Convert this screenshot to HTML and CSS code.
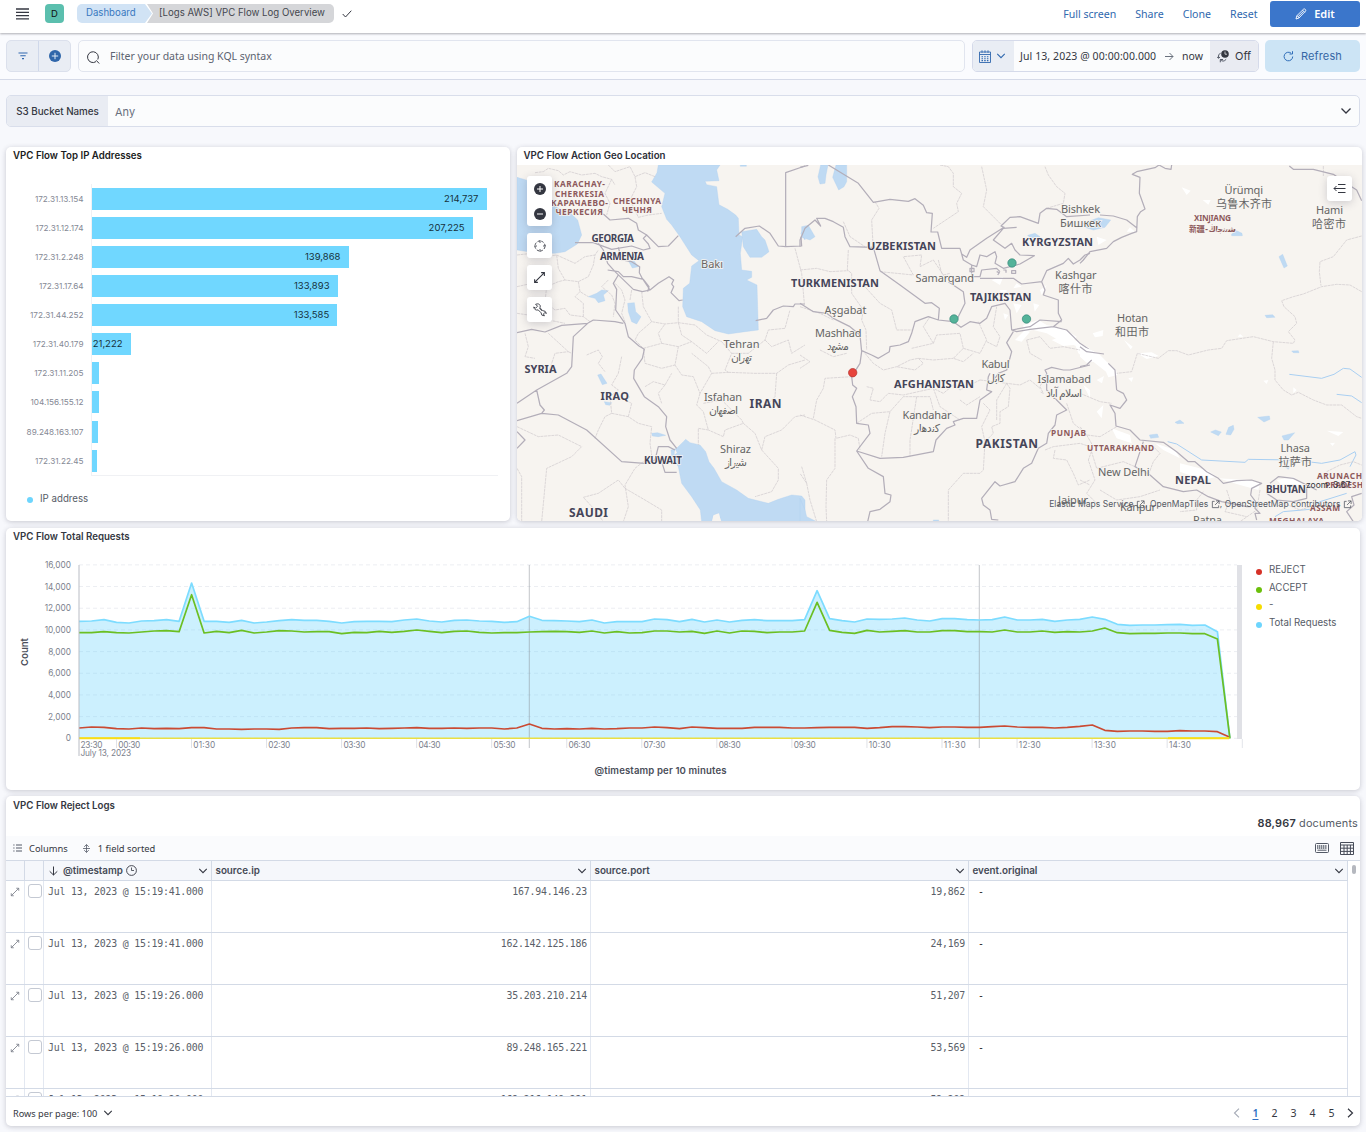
FILE: index.html
```html
<!DOCTYPE html>
<html lang="en">
<head>
<meta charset="utf-8">
<title>[Logs AWS] VPC Flow Log Overview</title>
<link rel="stylesheet" href="styles.css">
</head>
<body>
<svg class="defs" width="0" height="0" aria-hidden="true">
  <symbol id="chev" viewBox="0 0 12 12"><path d="M1.5 3.5 6 8l4.500-4.500" fill="none" stroke="currentColor" stroke-width="1.300"/></symbol>
  <symbol id="expand" viewBox="0 0 12 12"><path d="M7.500 1.500h3v3M10.500 1.500l-9 9M1.500 7.500v3h3" fill="none" stroke="currentColor"/></symbol>
  <symbol id="popout" viewBox="0 0 10 10"><path d="M4 1.500H1.500v7h7V6M5.500 1h3.500v3.500M9 1 4.500 5.500" fill="none" stroke="currentColor" stroke-width=".9"/></symbol>
</svg>

<header class="header">
  <svg class="burger" viewBox="0 0 13 12"><path d="M0 1h13M0 4.300h13M0 7.600h13M0 10.900h13" stroke="#343741" stroke-width="1.300"/></svg>
  <span class="avatar">D</span>
  <nav class="crumbs"><span class="crumb first">Dashboard</span><span class="crumb last">[Logs AWS] VPC Flow Log Overview</span></nav>
  <svg class="tick" viewBox="0 0 10 8"><path d="M.7 4 3.500 7 9.300.7" fill="none" stroke="#343741"/></svg>
  <nav class="links"><a>Full screen</a><a>Share</a><a>Clone</a><a>Reset</a></nav>
  <button class="edit"><svg viewBox="0 0 12 12"><path d="M1 11l.8-3.200L8.500 1.200q.9-.7 1.800.2t.2 1.800L4 10 1 11zM2 7.600 4.300 10M7.600 2.200 9.800 4.400M3.200 8.600l5.400-5.300" fill="none" stroke="#fff" stroke-width=".9"/></svg>Edit</button>
</header>

<section class="querybar">
  <div class="filters">
    <span><svg width="10" height="8" viewBox="0 0 10 8"><path d="M.5 1h9M2.300 3.800h5.400M4 6.600h2" stroke="#3068ae" stroke-width="1.100"/></svg></span>
    <span><svg width="12" height="12" viewBox="0 0 12 12"><circle cx="6" cy="6" r="6" fill="#2f66aa"/><path d="M6 2.800v6.400M2.800 6h6.400" stroke="#dfe9f5"/></svg></span>
  </div>
  <div class="search"><svg width="14" height="14" viewBox="0 0 14 14"><path d="M10 11.600A5.400 5.400 0 1 1 11.800 9.500M10.200 10.300l3 3.200" fill="none" stroke="#343741"/></svg><span class="placeholder">Filter your data using KQL syntax</span></div>
  <div class="dates">
    <span class="cal"><svg width="12" height="13" viewBox="0 0 12 13"><path d="M.5 2h11v10.500H.500zM.5 4.500h11M3 .3v2.500M6 .3v2.500M9 .3v2.500" fill="none" stroke="#3068ae" stroke-width=".9"/><path d="M2.500 6.700h7M2.500 8.700h7M2.500 10.600h7" stroke="#3068ae" stroke-width="1.100" stroke-dasharray="1.500 1.200"/></svg><svg width="10" height="10"><use href="#chev"/></svg></span>
    <span class="range"><b>Jul 13, 2023 @ 00:00:00.000</b><svg width="9" height="9" viewBox="0 0 9 9"><path d="M0 4.500h8M4.500 1 8 4.500 4.500 8" fill="none" stroke="#69707d"/></svg><b>now</b></span>
    <span class="off"><svg width="12" height="13" viewBox="0 0 12 13"><circle cx="8" cy="4" r="3.800" fill="#343741"/><path d="M8 1.500v2.700h2" fill="none" stroke="#fff" stroke-width=".7"/><path d="M3.700 2.800Q.8 4.500 1.400 8M0 6.700l1.400 1.600L3 7.100M3.300 9.500Q6 12.800 9.200 9.300M3.300 12.300V9.500h2.700" fill="none" stroke="#555b68"/></svg>Off</span>
  </div>
  <button class="refresh"><svg width="11" height="11" viewBox="0 0 11 11"><path d="M9.700 5.500A4.300 4.300 0 1 1 8 2.100M6.500 3h3V.2" fill="none" stroke="#2f6db8"/></svg>Refresh</button>
</section>

<main>
  <div class="control"><span class="control-name">S3 Bucket Names</span><span class="control-value">Any</span><svg width="12" height="12"><use href="#chev"/></svg></div>

  <div class="row">
    <section class="panel ips">
      <h2>VPC Flow Top IP Addresses</h2>
      <div class="bars">
        <div class="bar"><label>172.31.13.154</label><i style="width:395px">214,737</i></div>
        <div class="bar"><label>172.31.12.174</label><i style="width:381px">207,225</i></div>
        <div class="bar"><label>172.31.2.248</label><i style="width:257px">139,868</i></div>
        <div class="bar"><label>172.31.17.64</label><i style="width:246px">133,893</i></div>
        <div class="bar"><label>172.31.44.252</label><i style="width:245.700px">133,585</i></div>
        <div class="bar"><label>172.31.40.179</label><i style="width:39px">21,222</i></div>
        <div class="bar"><label>172.31.11.205</label><i style="width:7px"></i></div>
        <div class="bar"><label>104.156.155.12</label><i style="width:7px"></i></div>
        <div class="bar"><label>89.248.163.107</label><i style="width:6.600px"></i></div>
        <div class="bar"><label>172.31.22.45</label><i style="width:5.500px"></i></div>
      </div>
      <div class="legend ip-legend"><span><em class="blue"></em>IP address</span></div>
    </section>

    <section class="panel geo">
      <h2>VPC Flow Action Geo Location</h2>
      <div class="map">
        <svg class="map-canvas" viewBox="517 165 845 356" width="845" height="356">
          <rect x="517" y="165" width="845" height="356" fill="#f7f4f0"/>
          <g transform="translate(515 140) scale(.33333)">
            <g class="water">
              <path d="M6 112 40 122 75 165 130 205 165 218 188 240 200 285 187 312 150 335 120 340 60 338 6 330Z"/>
              <path d="M430 75 426 98 410 126 450 160 440 200 455 238 470 255 495 290 530 345 552 362 530 378 524 430 505 445 503 500 515 530 560 545 600 572 640 582 690 575 730 570 726 435 695 420 710 412 710 394 680 390 676 340 683 290 672 285 670 235 662 225 638 208 612 194 605 140 575 134 570 124 612 122 605 90 615 75Z"/>
              <path d="M683 300 680 275 725 268 740 290 750 300 762 335 740 352 705 352 685 320Z"/>
              <path d="M468 930 485 925 505 905 512 898 525 908 555 915 572 935 582 965 597 985 620 1025 665 1050 700 1075 760 1090 790 1078 830 1065 860 1068 870 1080V1145H620L610 1120 595 1125 590 1145H560L556 1110 530 1070 500 1030 490 980 470 950Z"/>
              <path d="M220 470 245 460 260 450 280 452 265 465 270 482 250 488 240 475Z M338 490 358 488 362 515 378 530 365 552 350 545 340 515Z M340 362 358 364 370 380 352 384Z M248 705 258 702 276 730 262 734Z M268 785 290 788 284 796 272 794Z M410 880 428 878 452 886 430 890 412 888Z M858 280 870 260V300Z M676 75h18v4h-18Z"/>
            </g>
            <g class="land"><path d="M480 928 486 938 478 944Z M595 1127 612 1120 618 1145H592Z"/></g>
            <g class="admin">
              <path d="M60 98 85 95 100 85 130 92 145 105 165 95 200 105 240 100 260 110 290 118 300 135M280 75 300 95 345 80 360 110 390 98 420 110M360 110 365 140 345 180 360 210 370 232 400 225 440 220M290 118 270 160 285 190 275 225"/>
              <path d="M6 345 50 340 90 350 125 345 180 370 210 350 240 345 250 330M125 345 130 385 150 420 190 425 220 410 235 375 240 345M6 440 50 430 95 440 130 425 150 420M190 425 195 455 220 470M95 440 90 485 120 510 150 505 165 525 205 530 225 545M6 520 40 525 80 515 100 540 150 550M280 420 260 440 290 465 300 490 295 530M50 430 60 395 100 380M205 530 205 490 180 470 195 455"/>
              <path d="M30 580 40 620 30 650 60 655M100 580 160 635 120 640 100 700M160 635 170 640M215 645 250 630 262 650 250 670 270 695M320 650 310 700 290 735 310 750 285 770 290 820 270 830 250 870 240 895M290 820 340 830 370 850 410 860 405 910 410 945M340 830 350 790 330 780 345 770M6 860 70 890 130 885 200 920 170 950 95 985 80 1145M6 985 20 1010 20 1145M410 945 360 985 330 1035 340 1100 325 1145M330 1045 310 1020 250 1060 205 1072 240 1110 265 1145M330 1045 390 1080 440 1110 440 1145"/>
              <path d="M380 455 385 500 410 545 450 552 490 548 540 555 575 585 620 605 650 640 630 690 640 697M350 450 345 480M300 430 320 450 330 480 320 520 330 545M410 545 370 580 360 600 385 625M385 625 440 610 430 580 450 552M440 610 490 620 530 605 575 640 610 605M490 548 500 585 530 605M490 500 490 548M385 625 390 670 440 685 480 675 490 620M480 675 500 705 535 710 555 760 590 700 580 680 530 640M390 740 415 725 450 735 470 700M640 697 720 700 785 700 820 675 870 660M785 700 780 770 760 790M590 700 640 697M450 735 430 760 440 790M555 760 545 795 565 815 580 870 550 865 550 915M565 790 620 780 680 840 685 850 630 870 625 890 580 870M685 850 720 880 740 930 790 985 790 1020 770 1055 720 1070M740 930 750 890 800 870 840 830 870 825M650 640 700 640 750 600 760 570 810 565 825 510M750 600 770 620 820 600 830 640 870 615M840 325 860 400 868 490"/>
            </g>
            <g class="border">
              <path d="M180 308 235 308 290 328 350 318 385 330 405 325 400 312 385 295 395 285 430 320 460 318 490 287M265 222 285 240 340 235 365 250 370 270 395 285M250 310 265 330 278 370 300 395 355 448 382 455 405 450 380 412 373 398 374 380 350 365 320 360 310 322M405 450 430 430 462 410 476 420 470 432 476 440 468 458 492 482 503 480M278 390 310 395 325 410 350 410 385 418 402 440 398 455M310 405 295 430 305 448 302 510 330 550 340 590 372 618 388 628 382 655 358 690 356 715 388 770 430 800 455 830 452 860 465 900 485 925M6 578 50 568 90 576 140 556 218 550 235 540 300 545 325 550M218 550 175 590 170 680 155 700 65 750 6 790M65 750 75 795 88 810 80 820 6 842M80 820 130 825 215 870 320 965 388 970M6 875 30 900 6 925M388 970 420 960 430 920 460 920 480 930M440 965 450 997 485 997M662 290 690 265 733 258 765 280 790 318 812 320 860 318 858 290M812 318V98L870 78M722 542 755 535 775 510 805 498 835 500 840 492 870 492"/>
            </g>
          </g>
          <g transform="translate(800 140) scale(.33333)">
            <g class="water"><path d="M62 75H84L78 105 75 130 60 132 54 110Z M108 75H140L140 125 132 140 116 150 98 112Z M5 260 25 256 45 290 30 300 5 292Z M0 1075 15 1110 20 1130 50 1145H0Z M683 286 705 280 720 290 690 293Z M400 1140h16v5h-16Z"/></g>
            <g class="snow"><path d="M650 430 665 440 640 445Z M575 420 610 410 600 435Z M600 450 620 450 618 475 605 470Z M640 490 665 495 650 520Z M720 450 740 435 725 465Z M670 555 715 540 740 555 790 565 830 590 815 610 775 600 740 580 700 570 670 575Z M755 600 790 588 815 596 845 610 850 625 820 615 790 618Z M645 600 675 570 690 575 665 605Z M820 600 870 625V670L835 640Z M850 735 870 750V775Z M700 490 718 495 704 515Z M660 460 685 470 690 455 680 485 655 475Z M610 520 625 525 615 540Z"/></g>
            <g class="admin">
              <path d="M420 75 445 80 460 100 460 140 485 160 470 190 475 215 400 265M545 80 560 150 550 200 605 255M735 80 745 105 770 140 795 160 790 190 740 205M225 185 237 205 215 240 220 330M130 245 150 290 195 320M145 330 142 390 155 400 155 460 190 510 185 540 198 570 200 630M240 395 340 405 310 350 365 345 360 380 400 360 430 405 450 400M0 390 50 385 90 395 145 392M190 435 240 490 275 510 290 570 335 570M415 360 425 400 440 415"/>
              <path d="M335 625 400 610 370 560 390 530M400 610 410 585 480 580 490 625 540 640 560 600 535 545M490 625 460 655 490 665 520 640M195 640 220 670 250 690 290 680 330 660 355 655 400 660 460 655M355 655 370 670 345 690 290 680M200 740 220 745 210 780 240 785 265 760 310 765 400 745 430 760 460 735 480 750 540 720M170 850 215 820 270 815 310 770 390 770 400 810M270 815 255 880 245 950M350 770 330 900 330 950M400 745 420 800 480 840M480 780 500 795 540 770M620 730 630 745 625 800 600 815 600 850 575 860 580 880 555 905 550 990 540 1000 490 1000 445 1050 445 1145M540 720 620 730 660 735 690 720 720 745M550 790 570 810 545 860 555 905M560 605 590 620 600 590 580 560 590 500M590 840 590 780 620 730"/>
              <path d="M0 645 30 665 0 685M155 710 75 715 70 745 50 780 40 835M0 825 45 840 105 870 108 895 150 885 175 895 180 930M105 895 105 985 80 1020 78 1100 80 1145M5 980 20 1030 0 1000M20 1030 30 1080 50 1145M60 630 100 650 140 640M0 500 60 520 100 540"/>
              <path d="M740 700 720 740 730 760 720 755M800 790 820 850 845 870M735 930 760 920 840 910 870 920M765 930 760 955 800 960 820 1000 835 1035 870 1020M680 600 720 590 750 625 790 620 840 630M680 600 690 640 725 660"/>
            </g>
            <g class="border">
              <path d="M0 82 25 76M85 75 175 130 220 187 270 178 325 184 345 176 370 196 380 218 397 220 393 276 413 276 425 325 480 325 485 342 500 352 510 330 560 295 612 262 603 258 630 232 660 230 715 250 720 220 740 205 770 208 800 230 870 225M0 320 0 300 15 265 45 240 62 258 50 235 75 235 100 245 130 262 135 290 150 320 220 322 240 392 300 435 375 490 395 488 418 505 415 540M415 540 385 530 345 545 335 580 325 605 300 615 270 620 268 635 235 655 215 645 185 632M0 490 40 515 80 520 100 535 150 560 180 585 185 635 180 670 155 710 158 735 170 745 157 770 168 800 170 850 205 855 210 880 170 933 240 955 310 952 400 935 408 900 440 865 465 855 460 845 490 835 530 835 540 780 575 755 560 750 565 710 570 700M415 540 460 545 483 562 510 545 540 550 560 535 575 500 615 490 630 510 635 570 650 575 690 568 760 560 800 570 820 590 840 610 870 630M640 575 620 608 635 635 620 690 595 700 585 715M170 933 205 985 250 1010 255 1060 273 1065 270 1085 240 1108 210 1115 203 1145M485 342 490 360 515 375 515 410 540 410 545 390 590 385 600 395M515 375 530 380 540 345 560 350 585 335 590 350 585 370 610 385 660 372 703 347 660 345 645 330 635 310 615 325 580 300 610 265 650 262M540 415 590 415 640 415 665 432 725 425 740 392 790 370 805 355 820 372 840 360 855 345 870 340M445 425 490 455 495 490 470 540M725 425 735 450 730 465 775 480 775 520 785 540 760 560M635 570 690 560 720 540 785 545M740 700 735 690 755 682 790 690 810 690 870 675M740 700 740 750 770 780 800 810 770 825 765 855 745 880 740 910 715 925 695 970 670 985 645 1025 600 1038 585 1025 545 1075 550 1095 570 1110 575 1138 595 1140"/>
              <path d="M590 395 598 398 593 405M610 390h8v8M635 392h12v8h-12ZM510 385h12v10h-12Z"/>
            </g>
          </g>
          <g transform="translate(1080 140) scale(.33333)">
            <g class="water"><path d="M10 250 55 233 92 240 75 262 40 270 15 262Z M597 350 608 343 622 378 612 384Z M555 526 578 524 585 532 560 533Z M635 633 655 632 657 638 640 638Z M455 282 470 272 486 280 487 287 455 287Z M285 847 300 840 312 850 292 851Z M533 832 568 828 570 838 552 846Z M392 876 406 870 424 876 415 887Z M446 862 460 856 462 868 452 885 438 883Z M606 888 644 878 625 900 612 900Z M208 885 232 882 236 892 212 895Z M612 978 630 978 625 988Z"/></g>
            <g class="snow"><path d="M305 142 332 152 320 165Z M368 180 392 180 385 194Z M38 580 70 570 68 588 45 592Z M132 600 158 620 152 628Z M172 640 215 637 236 648 200 657Z M0 620 30 628 60 645 80 665 108 690 112 705 85 712 78 695 40 665 20 668 0 650Z M95 865 150 885 155 910 110 895Z M225 910 285 930 300 955 250 930Z M300 970 380 990 410 1010 370 1020 300 995Z M415 1015 500 1020 540 1030 535 1050 480 1035Z M590 1020 640 1010 670 1035 610 1040Z M740 872 790 876 775 888Z M550 722 565 720 560 732Z M640 742 650 750 640 760Z M473 590 480 582 490 590Z M145 715 160 712 155 726Z M50 815 70 795 65 835Z M0 735 25 755 40 770Z M150 262 165 275 140 275Z M50 290 80 300 55 315Z M750 910 765 908 758 918Z M50 720 72 708 66 730Z"/></g>
            <g class="river"><path d="M628 703 725 715 762 703 790 685 810 687 845 712M770 763 815 768 845 788M263 905 290 912 365 960 495 967 505 958 640 960 725 970 780 960 825 935 828 945 810 980M585 1130 610 1115 690 1108 720 1085 800 1060"/></g>
            <g class="admin">
              <path d="M845 288 800 300 760 350 720 365 718 395 723 437M845 455 810 435 770 433 725 440 670 462 640 470 605 482 612 500 645 530 650 550 625 575 645 600 640 610 580 605 520 590 440 602 425 625 385 630 325 645 290 632 265 632 235 655 172 640 155 695 110 700M580 605 575 655 585 690 585 720 610 750 635 765 655 757 700 780 740 795 785 795 830 830 845 835M730 78v30M0 760 60 785 95 790M110 860 60 890 20 885 0 860M20 885 40 920 25 960 45 1020 20 1060 50 1090M215 915 240 940 220 965 205 1005M165 980 130 965 50 985 30 920M370 1055 350 1080 350 1110 300 1115M440 1050 450 1080 435 1115 500 1130M540 1050 530 1110 480 1145M600 1085 660 1110 720 1090M60 1050 110 1080 180 1070 240 1050M0 1020 30 1035M740 995 780 975 820 965 845 975"/>
            </g>
            <g class="border">
              <path d="M275 75 273 88 255 85 237 75 225 83 170 95 157 103 180 112 178 160 195 207 182 215 172 230 170 275 155 280 125 292 100 305 80 325 30 335 10 360 0 370M60 225 100 228 140 240 172 265M628 78 640 88 700 88 760 103 815 140 830 150 845 182M0 620 20 635 72 642M85 670 105 690 110 750M0 680 20 675 35 660M110 750 130 760 140 780 120 805 90 795 105 820 108 858 150 870 180 900 250 907 290 935 325 965 345 965 380 995 415 1015 430 1030 470 1022 515 1020 545 1030 515 1045 512 1065 527 1085 525 1105 540 1120 525 1120 530 1140M190 905 165 980 210 1005 250 1040 310 1055 350 1050 385 1070 425 1085 500 1100 512 1100M570 1030 595 1010 640 1015 680 1035 710 1050M560 1060 590 1080 640 1085 680 1075 680 1045M820 1145 800 1115 822 1095 815 1070 845 1060"/>
            </g>
          </g>
          <g class="region">
            <text x="554" y="187" textLength="51">KARACHAY-</text><text x="555" y="196.500" textLength="49">CHERKESIA</text><text x="551" y="206" textLength="57">КАРАЧАЕВО-</text><text x="555.500" y="215" textLength="47.500">ЧЕРКЕСИЯ</text>
            <text x="613" y="203.500" textLength="48">CHECHNYA</text><text x="622" y="212.500" textLength="30">ЧЕЧНЯ</text>
            <text x="1051" y="436" textLength="35">PUNJAB</text><text x="1087" y="451" textLength="67">UTTARAKHAND</text>
            <text x="1194" y="221" textLength="37">XINJIANG</text><text x="1189" y="232" textLength="47">新疆 - شىنجاڭ</text>
            <text x="1317" y="478.500" textLength="45">ARUNACH</text><text x="1325" y="488" textLength="38">PRADESH</text><text x="1310" y="510.500" textLength="30">ASSAM</text><text x="1269" y="524" textLength="55">MEGHALAYA</text>
          </g>
          <g class="country">
            <text x="591.500" y="242" textLength="42.500" class="sm">GEORGIA</text><text x="600" y="259.500" textLength="44" class="sm">ARMENIA</text>
            <text x="524.500" y="373" textLength="32">SYRIA</text><text x="600.500" y="400" textLength="28.500">IRAQ</text><text x="644" y="464" textLength="38" class="sm">KUWAIT</text>
            <text x="569" y="517" textLength="39" class="lg">SAUDI</text><text x="749.500" y="408" textLength="32" class="lg">IRAN</text>
            <text x="791" y="286.500" textLength="88">TURKMENISTAN</text><text x="867" y="249.500" textLength="69">UZBEKISTAN</text><text x="1022" y="246" textLength="71">KYRGYZSTAN</text>
            <text x="970" y="301" textLength="61.500">TAJIKISTAN</text><text x="894" y="388" textLength="80">AFGHANISTAN</text><text x="975.500" y="447.500" textLength="62.500" class="lg">PAKISTAN</text>
            <text x="1175" y="484" textLength="36">NEPAL</text><text x="1266" y="493" textLength="40" class="sm">BHUTAN</text>
          </g>
          <g class="city">
            <text x="701" y="268" textLength="22">Bakı</text><text x="723.500" y="348" textLength="36">Tehran</text><text x="731" y="361" textLength="21">تهران</text>
            <text x="704" y="401" textLength="38">Isfahan</text><text x="709" y="414" textLength="29">اصفهان</text><text x="720" y="453" textLength="31">Shiraz</text><text x="725" y="466" textLength="22">شيراز</text>
            <text x="824.500" y="314" textLength="42">Aşgabat</text><text x="815" y="337" textLength="46.500">Mashhad</text><text x="827" y="350" textLength="22">مشهد</text>
            <text x="915.500" y="282" textLength="58.500">Samarqand</text><text x="902.500" y="419" textLength="49">Kandahar</text><text x="914" y="432" textLength="26">كندهار</text>
            <text x="981.500" y="368" textLength="28">Kabul</text><text x="987" y="382" textLength="18">كابل</text><text x="1037.500" y="383" textLength="53.500">Islamabad</text><text x="1046" y="396.500" textLength="36">اسلام آباد</text>
            <text x="1061" y="213" textLength="39">Bishkek</text><text x="1060" y="226.500" textLength="41">Бишкек</text><text x="1055" y="279" textLength="41.500">Kashgar</text><text x="1058.500" y="292.500" textLength="34">喀什市</text>
            <text x="1224.500" y="194" textLength="38.500">Ürümqi</text><text x="1216" y="208" textLength="56">乌鲁木齐市</text><text x="1316" y="214" textLength="27">Hami</text><text x="1312" y="228" textLength="34">哈密市</text>
            <text x="1117" y="322" textLength="31">Hotan</text><text x="1115" y="336" textLength="34">和田市</text><text x="1098" y="476" textLength="51.500">New Delhi</text>
            <text x="1280.500" y="452" textLength="29.500">Lhasa</text><text x="1278.500" y="466" textLength="33.500">拉萨市</text>
            <text x="1058" y="504" textLength="30">Jaipur</text><text x="1120" y="511" textLength="36">Kanpur</text><text x="1193" y="524" textLength="29">Patna</text>
          </g>
          <g stroke-width=".7">
            <g fill="#54b399" stroke="#35877a"><circle cx="1012" cy="263" r="4.200"/><circle cx="954" cy="319" r="4.200"/><circle cx="1026.500" cy="319" r="4.200"/></g>
            <circle cx="852.700" cy="372.700" r="4.200" fill="#e7443c" stroke="#b22f2b"/>
          </g>
        </svg>
        <div class="tools">
          <div class="tool zoomers"><svg width="12" height="12" viewBox="0 0 12 12"><circle cx="6" cy="6" r="6" fill="#343741"/><path d="M6 3v6M3 6h6" stroke="#fff"/></svg><svg width="12" height="12" viewBox="0 0 12 12"><circle cx="6" cy="6" r="6" fill="#343741"/><path d="M3 6h6" stroke="#fff"/></svg></div>
          <div class="tool"><svg width="12" height="12" viewBox="0 0 12 12"><circle cx="6" cy="6" r="5" fill="none" stroke="#343741" stroke-width=".9" stroke-dasharray="2.400 1.527" stroke-dashoffset="-.8"/><path d="M6 0v3M6 9v3M0 6h3M9 6h3" stroke="#343741" stroke-width=".8"/></svg></div>
          <div class="tool"><svg width="13" height="13"><use href="#expand"/></svg></div>
          <div class="tool"><svg width="14" height="14" viewBox="0 0 14 14"><path d="M2.600 1.300Q6-.1 7.300 2.800L7 4.800 9.600 7.600Q12.800 7.600 13.400 10.400L11.700 9.600 10.500 11 11.400 12.800Q8 13 8.100 9.800L5.200 6.900Q1.500 7.800 .7 4L2.600 5.100 4.600 3.300Z" fill="none" stroke="#343741" stroke-width=".9"/><path d="M6.200 5.200 9 8" stroke="#343741" stroke-width=".7"/></svg></div>
        </div>
        <div class="tool layers"><svg width="13" height="11" viewBox="0 0 13 11"><path d="M5 1.500h7.500M1 5.500h11.500M5 9.500h7.500M3.500 3 1 5.500 3.500 8" fill="none" stroke="#343741"/></svg></div>
        <div class="zoomlabel">zoom: 3.67</div>
        <div class="credits">Elastic Maps Service <svg><use href="#popout"/></svg>, OpenMapTiles <svg><use href="#popout"/></svg>, OpenStreetMap contributors <svg><use href="#popout"/></svg></div>
      </div>
    </section>
  </div>

  <section class="panel requests">
    <h2>VPC Flow Total Requests</h2>
    <div class="chart-row">
      <svg class="chart" viewBox="6 546 1240 234" width="1240" height="234">
        <g id="grid"></g>
        <path id="area" fill="#6dd5fd" fill-opacity=".35"/>
        <path d="M529.300 565v183M979.300 565v183" stroke="#888b94" stroke-opacity=".5" stroke-width="1"/>
        <path id="total" class="series" stroke="#7ddcff"/><path id="reject" class="series" stroke="#ca4a33"/><path id="accept" class="series" stroke="#6bbf23"/>
        <path d="M79 738.300H1229.500" stroke="#eadf42" stroke-width="1.500"/><path d="M79 738.300h61M1168 738.300h61" stroke="#f8dd16" stroke-width="1.900"/>
        <rect x="1237" y="565" width="5" height="174" fill="#e0e1e6"/><path d="M1242.300 739v9" stroke="#e3e5ea"/>
        <path d="M79 565v191" stroke="#b9bcc4"/>
        <g id="ticks" class="axis"></g>
        <text class="axis" x="80.500" y="756.300" textLength="50.500">July 13, 2023</text>
        <text class="axis-title" transform="translate(28.300 666) rotate(-90)" textLength="28">Count</text>
        <text class="axis-title" x="594.500" y="774" textLength="132">@timestamp per 10 minutes</text>
      </svg>
      <div class="legend"><span><em class="red"></em>REJECT</span><span><em class="green"></em>ACCEPT</span><span><em class="yellow"></em>-</span><span><em class="blue"></em>Total Requests</span></div>
    </div>
  </section>

  <section class="panel logs">
    <div class="logs-head"><h2>VPC Flow Reject Logs</h2><p><b>88,967</b> documents</p></div>
    <div class="toolbar">
      <svg width="9" height="8" viewBox="0 0 9 8"><path d="M3 1h6M3 4h6M3 7h6M.3 1h1.200M.3 4h1.200M.3 7h1.200" stroke="#535966"/></svg><span class="cols">Columns</span>
      <svg width="7" height="9" viewBox="0 0 7 9"><path d="M3.500.6v7.800M1.200 2.800 3.500.6 5.800 2.800M1.200 6.200l2.300 2.200 2.300-2.200M0 4.500h7" fill="none" stroke="#535966" stroke-width=".8"/></svg><span class="sorted">1 field sorted</span>
      <svg class="kbd" width="14" height="10" viewBox="0 0 14 10"><rect x=".5" y=".5" width="13" height="9" rx="1" fill="none" stroke="#535966"/><path d="M2 3h10M2 5h10" stroke="#535966" stroke-width="1.400" stroke-dasharray="1.300 .6"/><path d="M2.500 7.200h9" stroke="#535966"/></svg>
      <svg width="14" height="13" viewBox="0 0 14 13"><path d="M.5.5h13v12H.500zM.5 3h13M.5 6.200h13M.5 9.400h13M4 3v9.500M7.200 3v9.500M10.400 3v9.500" fill="none" stroke="#474c59" stroke-width="1"/></svg>
    </div>
    <div class="grid-wrap">
      <div class="table">
        <div class="tr th"><span></span><span></span><span class="ts"><svg width="9" height="10" viewBox="0 0 9 10"><path d="M4.500.5v8.500M.7 5.300 4.500 9 8.300 5.300" fill="none" stroke="#343741"/></svg>@timestamp<svg class="clock" width="11" height="11" viewBox="0 0 11 11"><circle cx="5.500" cy="5.500" r="4.900" fill="none" stroke="#343741" stroke-width=".9"/><path d="M5.500 2.500v3h2.500" fill="none" stroke="#343741" stroke-width=".8"/></svg><svg class="menu"><use href="#chev"/></svg></span><span>source.ip<svg class="menu"><use href="#chev"/></svg></span><span>source.port<svg class="menu"><use href="#chev"/></svg></span><span>event.original<svg class="menu"><use href="#chev"/></svg></span></div>
        <div class="tr"><span><svg><use href="#expand"/></svg></span><span><i></i></span><span>Jul 13, 2023 @ 15:19:41.000</span><span>167.94.146.23</span><span>19,862</span><span>-</span></div>
        <div class="tr"><span><svg><use href="#expand"/></svg></span><span><i></i></span><span>Jul 13, 2023 @ 15:19:41.000</span><span>162.142.125.186</span><span>24,169</span><span>-</span></div>
        <div class="tr"><span><svg><use href="#expand"/></svg></span><span><i></i></span><span>Jul 13, 2023 @ 15:19:26.000</span><span>35.203.210.214</span><span>51,207</span><span>-</span></div>
        <div class="tr"><span><svg><use href="#expand"/></svg></span><span><i></i></span><span>Jul 13, 2023 @ 15:19:26.000</span><span>89.248.165.221</span><span>53,569</span><span>-</span></div>
        <div class="tr"><span><svg><use href="#expand"/></svg></span><span><i></i></span><span>Jul 13, 2023 @ 15:19:20.000</span><span>162.216.149.221</span><span>52,202</span><span></span></div>
      </div>
      <div class="scroll"><i></i></div>
    </div>
    <footer><span class="rpp">Rows per page: 100</span><svg width="10" height="10"><use href="#chev"/></svg>
      <nav class="pages"><svg class="prev" viewBox="0 0 7 10"><path d="M6 .7 1.500 5 6 9.300" fill="none" stroke="#a6abb7" stroke-width="1.100"/></svg><a class="on">1</a><a>2</a><a>3</a><a>4</a><a>5</a><svg viewBox="0 0 7 10"><path d="M1 .7 5.500 5 1 9.300" fill="none" stroke="#343741" stroke-width="1.200"/></svg></nav>
    </footer>
  </section>
</main>
<script src="chart.js"></script>
</body>
</html>
```
FILE: styles.css
```css
*{box-sizing:border-box}
body{margin:0;background:#f7f8fc;color:#343741;font:10px Inter,"Liberation Sans",sans-serif;width:1366px;height:1132px;overflow:hidden}
.defs{position:absolute}
svg{display:block;flex:none}
button{border:0;font:inherit;padding:0;display:flex;align-items:center;justify-content:center}
h2,p{margin:0}
.header{position:relative;height:33px;padding:0 6px 6px 16px;display:flex;align-items:center;background:#fff;box-shadow:0 1px 2px rgba(60,60,70,.4)}
.burger{width:13px;height:12px}
.avatar{width:19px;height:19px;margin-left:16px;border-radius:4px;background:#5bbfae;color:#111;display:grid;place-items:center;font-size:9.500px}
.crumbs{display:flex;margin-left:13px;height:19px;line-height:18px;font-size:9.650px}
.crumb.first{width:75px;padding-left:9px;background:#d1e3f5;color:#3878bf;border-radius:5px 0 0 5px;clip-path:polygon(0 0,68px 0,100% 50%,68px 100%,0 100%)}
.crumb.last{width:187px;margin-left:-5px;padding-left:12px;background:#d5d6d9;color:#45484f;border-radius:0 5px 5px 0;clip-path:polygon(0 0,100% 0,100% 100%,0 100%,6px 50%);white-space:nowrap}
.tick{width:10px;height:8px;margin-left:8px}
.links{margin-left:auto;display:flex;gap:19px;color:#3068ae;font:10.600px "Noto Sans",sans-serif;margin-right:12.500px}
.edit{width:90px;height:26px;background:#3b76cb;border-radius:3px;color:#fff;gap:7px;font:600 11px "Noto Sans",sans-serif}
.edit svg{width:12px;height:12px}
.querybar{height:47px;border-bottom:1px solid #d5dae8;background:#fafbfe;padding:7px 6px;display:flex}
.filters{width:65px;height:32px;border:1px solid #dbe0ec;border-radius:5px;background:#e9edf4;display:flex}
.filters span{flex:1;display:grid;place-items:center}
.filters span+span{border-left:1px solid #cfd8ea}
.search{width:887px;height:32px;margin-left:7px;border:1px solid #e1e5ef;border-radius:5px;background:#fbfcfd;padding-left:7px;display:flex;align-items:center;gap:10px}
.search svg{margin-top:2px}
.placeholder{font:10.500px "Noto Sans",sans-serif;color:#5c6370;letter-spacing:-.02px}
.dates{width:287px;height:32px;margin-left:7px;border:1px solid #d5daea;border-radius:5px;background:#fbfcfd;display:flex;overflow:hidden}
.cal{width:41px;background:#e9edf4;display:flex;align-items:center;gap:5px;padding-left:6px;color:#3068ae}
.range{width:196px;padding-left:6px;display:flex;align-items:center;justify-content:space-between;padding-right:7px}
.range b{font:10.500px "Noto Sans",sans-serif}
.range b:first-child{letter-spacing:.09px}
.off{flex:1;background:#e9ebf2;display:flex;align-items:center;gap:6px;padding-left:7px;font-size:11px}
.refresh{width:95px;height:32px;margin-left:6px;border-radius:5px;background:#cce4f5;color:#3566a5;gap:7px;font-size:11px;letter-spacing:.12px}
main{padding:15px 6px 0}
.control{height:32px;width:1354px;border:1px solid #d9deeb;border-radius:5px;background:#fbfcfd;display:flex;align-items:center;padding-right:7px}
.control-name{width:101px;height:30px;background:#e9ecf3;display:grid;place-items:center;font-size:9.800px;font-weight:500;border-radius:4px 0 0 4px}
.control-value{margin:1px 0 0 7px;font-size:11px;color:#69707d}
.control svg{margin-left:auto}
.row{display:flex;gap:7px;margin-top:20px}
.panel{background:#fff;border-radius:5px;box-shadow:0 1px 5px rgba(45,48,65,.24)}
.panel h2{padding-left:7px;height:18px;line-height:18px;font-size:9.700px;font-weight:600;color:#1a1c21;white-space:nowrap}
.ips{width:504px;height:374px;flex:none}
.bars{width:407px;height:291.500px;margin:19px 0 0 85px;border-left:1px solid #f0f1f4;border-bottom:1px solid #f0f1f4}
.bar{height:29.130px;display:flex;align-items:center}
.bar label{width:70px;margin-left:-78.500px;margin-right:8px;text-align:right;font-size:8.200px;color:#858995}
.bar i{height:22px;background:#70d7ff;font:9.500px/21px Inter,sans-serif;text-align:right;padding-right:8px;color:#16313c;display:block;flex:none}
.bar:nth-child(n+7) i{padding:0}
.legend{display:flex;flex-direction:column;font-size:9.700px;color:#555b66}
.legend span{display:flex;align-items:center}
.legend em{width:6px;height:6px;border-radius:50%;margin-right:7px;position:relative;top:2px}
.red{background:#d63127}.green{background:#6bbf0b}.yellow{background:#f6dc00}.blue{background:#6dd5fd}
.ip-legend{padding:17px 0 0 21px}
.geo{width:845px;flex:none;overflow:hidden;height:374px}
.geo h2{padding-left:6.500px;color:#2b2e36}
.map{height:356px;position:relative}
.water{fill:#bfdaf3;stroke:#accff0}
.land{fill:#f7f4f0}.snow{fill:#fff}
.river{fill:none;stroke:#a9cff2;stroke-width:3}
.admin{fill:none;stroke:#d3cdd0;stroke-width:2.300;stroke-dasharray:9 2}
.border{fill:none;stroke:#b3aeb9;stroke-width:3.700;stroke-linejoin:round}
.map-canvas text{paint-order:stroke;stroke:#f7f4f0;stroke-width:1.500px;font-family:"Noto Sans","Noto Sans CJK SC","DejaVu Sans",sans-serif}
.country text{font-size:11px;font-weight:700;fill:#454559}
.country .sm{font-size:10px}.country .lg{font-size:12px}
.city{font-size:11px;fill:#656565}
.region{font-size:8.300px;font-weight:700;fill:#8d5a5c}
.tools{position:absolute;left:10px;top:11px;display:flex;flex-direction:column;gap:7px}
.tool{width:25px;height:25px;background:#fff;border-radius:3px;display:grid;place-items:center;box-shadow:0 2px 9px rgba(60,60,80,.22)}
.zoomers{height:50px}
.layers{position:absolute;right:10px;top:11px}
.zoomlabel{position:absolute;left:789px;top:315px;font-size:8.500px}
.credits{position:absolute;right:10px;bottom:11px;display:flex;align-items:center;font-size:8.500px;letter-spacing:.05px;height:12px;color:#555a64;white-space:pre}
.credits svg{width:9px;height:9px}
.requests{margin-top:7px;height:262px}
.requests h2,.logs h2{color:#343741}
.chart-row{display:flex}
.chart-row .legend{padding:15px 0 0 10px;line-height:17.700px}
.series{fill:none;stroke-width:1.700;stroke-linejoin:round}
.axis{font-size:8.300px;fill:#7c818d}
.axis-title{font-size:9.600px;font-weight:600;fill:#4a4e59}
.logs{margin-top:6px;height:330px;overflow:hidden}
.logs-head{height:40px;display:flex;justify-content:space-between}
.logs-head h2{padding-top:1px}
.logs-head p{padding:20px 2px 0 0;font-size:10.900px;letter-spacing:.17px;color:#555b66}
.logs-head b{font-weight:600;color:#343741}
.toolbar{height:25px;background:#fafbfd;border-bottom:1px solid #d3dae6;display:flex;align-items:center;padding:0 6px 0 7px;font:9.350px "Noto Sans",sans-serif}
.cols{margin:0 15px 0 7px}.sorted{margin-left:8px}
.kbd{margin-left:auto;margin-right:11px}
.grid-wrap{height:236px;display:flex;overflow:hidden;border-bottom:1px solid #d3dae6}
.table{width:1342px}
.tr{display:grid;grid-template-columns:19px 19px 168px 379px 378px 379px;height:52px;border-bottom:1px solid #d3dae6;font:9.900px/21px "DejaVu Sans Mono","Liberation Mono",monospace;letter-spacing:-.2px;color:#5b5f69}
.tr>span{border-right:1px solid #e3e8f1;padding:0 4px;overflow:hidden;white-space:nowrap}
.tr>span:nth-child(4),.tr>span:nth-child(5){text-align:right;padding-right:3px}
.tr>span:nth-child(6){padding-left:9px;color:#222;border-right-color:#d9dfeb}
.tr>span:first-child svg{width:10px;height:10px;margin-top:6px;color:#777c87}
.tr i{display:block;width:14px;height:14px;border:1px solid #c4c9d3;border-radius:3px;background:#fff;margin:3px 0 0 -1px}
.tr.th{height:20px;background:#f5f7fb;font:600 9.800px Inter,sans-serif;letter-spacing:0;color:#444955}
.tr.th>span{display:flex;align-items:center;text-align:left;border-color:#d3dae6;color:#444955}
.tr.th>span:nth-child(n+4){padding-left:3.500px;padding-right:3px}
.tr.th .ts{padding-left:5px;gap:5px}
.clock{margin-left:-2px}
.menu{width:10px;height:10px;margin-left:auto;color:#343741}
.tr.th .ts .menu{margin-right:-1px}
.scroll{flex:1;padding:4px 0 0 4px}
.scroll i{display:block;width:4px;height:9px;border-radius:2px;background:#b5b8bf}
footer{height:29px;padding:3px 6px 0 7px;display:flex;align-items:center;font:9.200px "Noto Sans",sans-serif;gap:6px}
.pages{margin-left:auto;display:flex;align-items:center;font-size:10.500px}
.pages a{width:19px;text-align:center}
.pages svg{width:7px;height:10px;margin:0 0 0 6px}
.pages .prev{margin:0 6px 0 0}
.pages .on{color:#2f6fc4;font-weight:600;text-decoration:underline;text-underline-offset:2px}
```
FILE: chart.js
```js
// Series heights are in thirds of a pixel below the top of the plot panel (y = 525).
const X0 = 79, STEP = 12.51;
const total = [289,288,284,292,294,288,287,284,289,174,289,289,292,286,294,291,287,284,286,286,289,294,290,289,289,290,285,282,288,291,286,285,288,289,292,290,274,286,287,288,290,285,294,290,290,290,282,284,290,283,291,285,291,286,284,287,287,287,284,197,281,287,291,282,283,282,279,285,288,281,281,284,285,284,276,285,285,283,289,285,283,276,283,298,301,300,300,299,298,301,300,320,640];
const accept = [323,323,320,323,324,321,318,317,320,209,324,319,323,316,324,321,317,318,321,320,320,326,322,323,319,322,319,315,319,323,319,318,322,324,323,323,321,320,319,320,322,318,324,320,324,323,318,318,321,319,325,318,324,318,319,323,321,321,318,232,316,322,325,316,321,319,317,321,321,317,317,320,320,321,315,321,321,318,322,320,321,318,309,323,326,325,325,324,324,326,326,342,640];
const reject = [609,606,607,611,612,609,611,610,611,608,608,612,612,613,612,612,613,609,608,608,611,610,610,609,611,610,609,608,610,610,609,610,609,609,612,609,597,610,612,611,612,610,612,611,609,609,606,608,611,606,608,610,610,610,607,607,607,609,609,608,607,607,607,610,608,605,605,606,608,606,606,607,607,605,603,606,607,607,609,607,604,600,616,619,618,618,619,619,617,618,618,620,637];
const line = a => 'M' + a.map((y, i) => (X0 + i * STEP).toFixed(1) + ' ' + (525 + y / 3).toFixed(1)).join('L');
for (const [id, data] of Object.entries({ total, accept, reject })) document.getElementById(id).setAttribute('d', line(data));
document.getElementById('area').setAttribute('d', line(total) + 'L79 738.3Z');

let grid = '';
for (let i = 0; i <= 8; i++) {
  const y = 738.3 - i * 21.68;
  grid += `<path d="M79 ${y}H1237" stroke="#eceef2" stroke-dasharray="4 3"/><text class="axis" x="71" y="${y + 3}" text-anchor="end">${(i * 2000).toLocaleString('en-US')}</text>`;
}
document.getElementById('grid').innerHTML = grid;

const pad = h => String(h).padStart(2, '0');
let ticks = '<text x="80.5" y="748.3" textLength="22">23:30</text>';
for (let h = 0; h < 15; h++) {
  const x = h ? 191.5 + (h - 1) * 75.05 : 116.5;
  ticks += `<path d="M${x} 739v9" stroke="#dfe1e7"/><text x="${x + 1.8}" y="748.3" textLength="22">${pad(h)}:30</text>`;
}
document.getElementById('ticks').innerHTML = ticks;
```
